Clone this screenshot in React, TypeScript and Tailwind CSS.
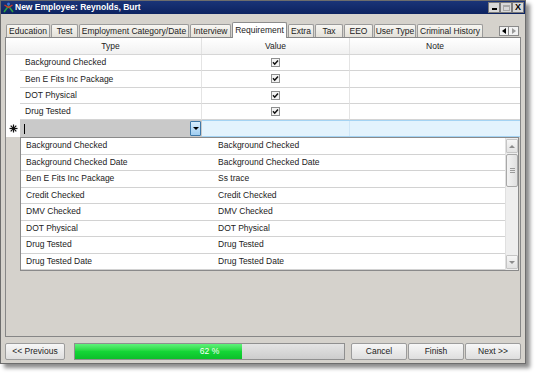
import React from 'react';

const tabs = [
  { label: 'Education', w: 'w-[44px]' },
  { label: 'Test', w: 'w-[27px]' },
  { label: 'Employment Category/Date', w: 'w-[110px]' },
  { label: 'Interview', w: 'w-[41px]' },
  { label: 'Requirement', w: 'w-[55px]', active: true },
  { label: 'Extra', w: 'w-[26px]' },
  { label: 'Tax', w: 'w-[28px]' },
  { label: 'EEO', w: 'w-[29px]' },
  { label: 'User Type', w: 'w-[42px]' },
  { label: 'Criminal History', w: 'w-[66px]' },
];

const rows = ['Background Checked', 'Ben E Fits Inc Package', 'DOT Physical', 'Drug Tested'];

const options = [
  ['Background Checked', 'Background Checked'],
  ['Background Checked Date', 'Background Checked Date'],
  ['Ben E Fits Inc Package', 'Ss trace'],
  ['Credit Checked', 'Credit Checked'],
  ['DMV Checked', 'DMV Checked'],
  ['DOT Physical', 'DOT Physical'],
  ['Drug Tested', 'Drug Tested'],
  ['Drug Tested Date', 'Drug Tested Date'],
];

function CheckBox() {
  return (
    <svg width="9" height="9" viewBox="0 0 9 9">
      <rect x="0.5" y="0.5" width="8" height="8" fill="#f4f4f4" stroke="#8e8f8f" />
      <path d="M2 4.3 L3.7 6.2 L7 2.4" fill="none" stroke="#111" strokeWidth="1.5" />
    </svg>
  );
}

function AppIcon() {
  return (
    <svg width="11" height="11" viewBox="0 0 11 11">
      <path d="M1 10 L5.5 4 L10 10" fill="none" stroke="#2ea043" strokeWidth="1.6" />
      <path d="M1.5 3 L5.5 5.5 L9.5 3" fill="none" stroke="#d23a2a" strokeWidth="1.4" />
      <circle cx="5.5" cy="2" r="1.5" fill="#3b6fd8" />
    </svg>
  );
}

function Asterisk() {
  return (
    <svg width="9" height="9" viewBox="0 0 9 9">
      <g stroke="#111" strokeWidth="1.2">
        <line x1="4.5" y1="0.5" x2="4.5" y2="8.5" />
        <line x1="0.5" y1="4.5" x2="8.5" y2="4.5" />
        <line x1="1.7" y1="1.7" x2="7.3" y2="7.3" />
        <line x1="7.3" y1="1.7" x2="1.7" y2="7.3" />
      </g>
    </svg>
  );
}

export default function App() {
  return (
    <div className="w-[537px] h-[377px] bg-white font-['Liberation_Sans',Arial,sans-serif] text-[8.5px] text-[#222] overflow-hidden">
      <div className="w-[526px] h-[364px] flex flex-col border border-[#6d6d6d] bg-[#d5d2cc] shadow-[4px_4px_4px_rgba(0,0,0,0.45)]">
        {/* title bar */}
        <div className="h-[13px] flex items-center bg-gradient-to-b from-[#1a3478] to-[#0c2260] pl-[2px] pr-px">
          <AppIcon />
          <span className="ml-px text-white font-bold text-[8.5px] leading-none">New Employee: Reynolds, Burt</span>
          <div className="flex-1" />
          <div className="flex">
            <div className="w-[12px] h-[11px] bg-[#d8d8d8] border border-[#7b7b7b] flex items-end justify-center pb-[2px]">
              <div className="w-[5px] h-[2px] bg-black" />
            </div>
            <div className="w-[12px] h-[11px] bg-[#d8d8d8] border border-[#7b7b7b] flex items-center justify-center">
              <div className="w-[7px] h-[6px] border border-[#a8a8a8] border-t-2" />
            </div>
            <div className="w-[12px] h-[11px] bg-[#d8d8d8] border border-[#7b7b7b] flex items-center justify-center text-[9px] font-bold leading-none text-black">
              X
            </div>
          </div>
        </div>

        <div className="flex-1 flex flex-col px-[4px] pb-[3px]">
          {/* tabs */}
          <div className="mt-[8px] h-[16px] flex items-end pl-px">
            {tabs.map((t) => (
              <div
                key={t.label}
                className={
                  t.active
                    ? `${t.w} h-[16px] mr-px relative z-10 bg-white border border-b-0 border-[#8d8d8d] rounded-t-[2px] flex items-center justify-center whitespace-nowrap`
                    : `${t.w} h-[14px] mr-px bg-gradient-to-b from-[#f7f6f2] to-[#e2dfd7] border border-b-0 border-[#9b9b9b] rounded-t-[2px] flex items-center justify-center whitespace-nowrap`
                }
              >
                {t.label}
              </div>
            ))}
            <div className="flex-1" />
            <div className="flex mb-[2px] mr-[2px]">
              <div className="w-[10px] h-[10px] bg-[#f2f2f2] border border-[#8a8a8a] flex items-center justify-center">
                <div className="w-0 h-0 border-y-[3px] border-y-transparent border-r-[4px] border-r-black" />
              </div>
              <div className="w-[10px] h-[10px] bg-[#f2f2f2] border border-l-0 border-[#8a8a8a] flex items-center justify-center">
                <div className="w-0 h-0 border-y-[3px] border-y-transparent border-l-[4px] border-l-[#9a9a9a]" />
              </div>
            </div>
          </div>

          {/* grid panel */}
          <div className="-mt-px h-[300px] border border-[#868686] bg-[#d5d2cc] flex flex-col">
            <div className="h-[17px] flex bg-gradient-to-b from-white to-[#f1f1f1] border-b border-[#d6d6d6]">
              <div className="w-[14px]" />
              <div className="w-[182px] flex items-center justify-center border-r border-[#e2e2e2]">Type</div>
              <div className="w-[148px] flex items-center justify-center border-r border-[#e2e2e2]">Value</div>
              <div className="flex-1 flex items-center justify-center">Note</div>
            </div>

            {rows.map((r) => (
              <div key={r} className="h-[16.25px] flex bg-white">
                <div className="w-[14px]" />
                <div className="w-[182px] flex items-center pl-[5px] border-r border-b border-[#e4e4e4] border-b-[#d4d4d4]">{r}</div>
                <div className="w-[148px] flex items-center justify-center border-r border-b border-[#e4e4e4] border-b-[#d4d4d4]">
                  <CheckBox />
                </div>
                <div className="flex-1 border-b border-[#d4d4d4]" />
              </div>
            ))}

            {/* new row */}
            <div className="h-[17px] flex">
              <div className="w-[14px] bg-white flex items-center justify-center">
                <Asterisk />
              </div>
              <div className="w-[182px] bg-[#c9c9c9] flex items-center pl-[4px] pr-px">
                <div className="w-px h-[10px] bg-black" />
                <div className="flex-1" />
                <div className="w-[11px] h-[15px] border border-[#3e78a8] rounded-[1px] bg-gradient-to-b from-[#d9eefc] to-[#9fcdf1] flex items-center justify-center">
                  <div className="w-0 h-0 border-x-[3px] border-x-transparent border-t-[3px] border-t-black" />
                </div>
              </div>
              <div className="flex-1 flex bg-[#e3f3fd] border-y border-[#a4d3f3]">
                <div className="w-[148px] border-r border-[#cfe6f7]" />
                <div className="flex-1" />
              </div>
            </div>

            {/* dropdown list */}
            <div className="ml-[14px] mr-px flex border border-[#8a8a8a] bg-white">
              <div className="flex-1 flex flex-col">
                {options.map(([a, b]) => (
                  <div key={a} className="h-[16.5px] flex border-b border-[#d2d2d2]">
                    <div className="w-[194px] flex items-center pl-[5px]">{a}</div>
                    <div className="flex-1 flex items-center pl-[3px]">{b}</div>
                  </div>
                ))}
              </div>
              <div className="w-[13px] bg-[#eeeeee] border-l border-[#e0e0e0] flex flex-col items-center">
                <div className="w-[12px] h-[14px] mt-px bg-gradient-to-b from-[#f6f6f6] to-[#e2e2e2] border border-[#c5c5c5] rounded-[1px] flex items-center justify-center">
                  <div className="w-0 h-0 border-x-[3px] border-x-transparent border-b-[3px] border-b-[#8c8c8c]" />
                </div>
                <div className="w-[12px] h-[33px] mt-px bg-gradient-to-r from-[#f3f3f3] to-[#e0e0e0] border border-[#a8a8a8] rounded-[2px] flex flex-col items-center justify-center gap-px">
                  <div className="w-[5px] h-px bg-[#9a9a9a]" />
                  <div className="w-[5px] h-px bg-[#9a9a9a]" />
                  <div className="w-[5px] h-px bg-[#9a9a9a]" />
                </div>
                <div className="flex-1" />
                <div className="w-[12px] h-[14px] mb-px bg-gradient-to-b from-[#f6f6f6] to-[#e2e2e2] border border-[#c5c5c5] rounded-[1px] flex items-center justify-center">
                  <div className="w-0 h-0 border-x-[3px] border-x-transparent border-t-[3px] border-t-[#8c8c8c]" />
                </div>
              </div>
            </div>
          </div>

          {/* bottom bar */}
          <div className="mt-[6px] h-[17px] flex">
            <button className="w-[60px] h-full bg-gradient-to-b from-[#f7f7f7] to-[#dedede] border border-[#9c9c9c] rounded-[2px] text-[8.5px]">
              &lt;&lt; Previous
            </button>
            <div className="ml-[9px] w-[271px] h-full relative border border-[#8f8f8f] bg-gradient-to-b from-[#e4e4e4] to-[#cdcdcd]">
              <div className="h-full w-[62%] bg-gradient-to-b from-[#5ef27a] via-[#14d636] to-[#0cbf2a]" />
              <div className="absolute inset-0 flex items-center justify-center text-white">62 %</div>
            </div>
            <div className="flex-1" />
            <button className="w-[56px] h-full bg-gradient-to-b from-[#f7f7f7] to-[#dedede] border border-[#9c9c9c] rounded-[2px] text-[8.5px]">
              Cancel
            </button>
            <button className="ml-px w-[56px] h-full bg-gradient-to-b from-[#f7f7f7] to-[#dedede] border border-[#9c9c9c] rounded-[2px] text-[8.5px]">
              Finish
            </button>
            <button className="ml-px w-[56px] h-full bg-gradient-to-b from-[#f7f7f7] to-[#dedede] border border-[#9c9c9c] rounded-[2px] text-[8.5px]">
              Next &gt;&gt;
            </button>
          </div>
        </div>
      </div>
    </div>
  );
}
